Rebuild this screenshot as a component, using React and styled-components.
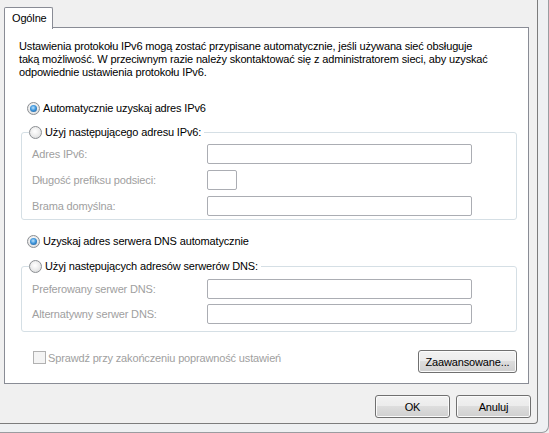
import React from "react";
import styled, { createGlobalStyle, css } from "styled-components";

const GlobalStyle = createGlobalStyle`
  html, body {
    margin: 0;
    padding: 0;
    background: #f0f0f0;
  }
  body {
    font-family: "Liberation Sans", Arial, sans-serif;
    font-size: 11px;
    letter-spacing: -0.15px;
    color: #000;
  }
`;

const Frame = styled.div`
  width: 549px;
  height: 433px;
  box-sizing: border-box;
  background: #eef0f2;
  border-right: 1px solid #9a9ca0;
  border-bottom: 1px solid #9a9ca0;
  border-bottom-right-radius: 7px;
  overflow: hidden;
`;

const Dialog = styled.div`
  width: 538px;
  height: 424px;
  box-sizing: border-box;
  background: #f0f0f0;
  border-right: 1px solid #7c7c7c;
  border-bottom: 1px solid #7c7c7c;
  border-bottom-right-radius: 4px;
  padding: 7px 6px 0 4px;
  display: flex;
  flex-direction: column;
`;

const TabStrip = styled.div`
  display: flex;
  height: 21px;
  margin-bottom: -1px;
  position: relative;
  z-index: 1;
`;

const Tab = styled.div`
  width: 49px;
  box-sizing: border-box;
  height: 22px;
  padding: 3px 0 0 7px;
  background: #fff;
  border: 1px solid #898c95;
  border-bottom: none;
  border-radius: 2px 2px 0 0;
  line-height: 14px;
`;

const Panel = styled.div`
  height: 357px;
  box-sizing: border-box;
  margin-right: 2px;
  background: #fff;
  border: 1px solid #898c95;
  padding: 12px 11px 0 14px;
  display: flex;
  flex-direction: column;
`;

const Intro = styled.p`
  margin: 0;
  line-height: 13px;
`;

const RadioRow = styled.label`
  display: flex;
  align-items: center;
  gap: 3px;
  height: 15px;
  line-height: 15px;
  margin: ${(p) => p.$margin || "0"};
  padding-left: 8px;
  white-space: nowrap;
`;

const Radio = styled.span`
  width: 13px;
  height: 13px;
  box-sizing: border-box;
  border-radius: 50%;
  border: 1px solid #8b8e92;
  background: radial-gradient(circle at 45% 40%, #ffffff 0%, #eeeeee 45%, #d2d4d6 100%);
  position: relative;
  flex: none;
  ${(p) =>
    p.$checked &&
    css`
      &::after {
        content: "";
        position: absolute;
        left: 2px;
        top: 2px;
        width: 7px;
        height: 7px;
        border-radius: 50%;
        background: radial-gradient(circle at 45% 40%, #bfe3fb 0%, #3f97dd 45%, #1b4f86 100%);
      }
    `}
`;

const Group = styled.fieldset`
  margin: ${(p) => p.$margin || "0"};
  margin-left: 2px;
  margin-right: 0;
  padding: ${(p) => p.$top || 3}px 0 ${(p) => p.$bottom || 5}px 10px;
  border: 1px solid #d5dfe5;
  border-radius: 3px;
  display: grid;
  grid-template-columns: 175px 265px;
  row-gap: ${(p) => p.$gap || 6}px;
  align-items: center;
`;

const Legend = styled.legend`
  padding: 0 3px 0 0;
  margin-left: -3px;
  display: flex;
  align-items: center;
  gap: 3px;
  height: 15px;
  line-height: 15px;
  white-space: nowrap;
`;

const FieldLabel = styled.span`
  color: #a0a0a0;
  line-height: 13px;
`;

const Field = styled.div`
  width: ${(p) => p.$width || 265}px;
  height: 20px;
  box-sizing: border-box;
  border: 1px solid #abadb3;
  border-radius: 2px;
  background: #fff;
`;

const FooterRow = styled.div`
  display: flex;
  align-items: center;
  justify-content: space-between;
  margin: 18px 0 0 14px;
`;

const CheckRow = styled.label`
  display: flex;
  align-items: center;
  gap: 2px;
  margin-top: -8px;
  color: #a0a0a0;
`;

const Check = styled.span`
  width: 13px;
  height: 13px;
  box-sizing: border-box;
  border: 1px solid #b1b1b1;
  background: #f4f4f4;
  flex: none;
`;

const Button = styled.button`
  width: ${(p) => p.$width || 75}px;
  height: 23px;
  box-sizing: border-box;
  padding: 0;
  font: inherit;
  letter-spacing: inherit;
  color: #000;
  border: 1px solid #707070;
  border-radius: 3px;
  background: linear-gradient(#f2f2f2 0%, #ebebeb 50%, #dddddd 50%, #cfcfcf 100%);
  box-shadow: inset 0 0 0 1px #fbfbfb;
`;

const ButtonBar = styled.div`
  display: flex;
  justify-content: flex-end;
  gap: 6px;
  margin-top: 11px;
`;

export default function App() {
  return (
    <>
      <GlobalStyle />
      <Frame>
        <Dialog>
          <TabStrip>
            <Tab>Ogólne</Tab>
          </TabStrip>
          <Panel>
            <Intro>
              Ustawienia protokołu IPv6 mogą zostać przypisane automatycznie, jeśli używana sieć obsługuje
              <br />
              taką możliwość. W przeciwnym razie należy skontaktować się z administratorem sieci, aby uzyskać
              <br />
              odpowiednie ustawienia protokołu IPv6.
            </Intro>

            <RadioRow $margin="22px 0 0 0">
              <Radio $checked />
              Automatycznie uzyskaj adres IPv6
            </RadioRow>

            <Group $margin="9px 0 0 0" $top={4} $gap={6} $bottom={3}>
              <Legend>
                <Radio />
                Użyj następującego adresu IPv6:
              </Legend>
              <FieldLabel>Adres IPv6:</FieldLabel>
              <Field />
              <FieldLabel>Długość prefiksu podsieci:</FieldLabel>
              <Field $width={30} />
              <FieldLabel>Brama domyślna:</FieldLabel>
              <Field />
            </Group>

            <RadioRow $margin="14px 0 0 0">
              <Radio $checked />
              Uzyskaj adres serwera DNS automatycznie
            </RadioRow>

            <Group $margin="10px 0 0 0" $top={5} $gap={5} $bottom={7}>
              <Legend>
                <Radio />
                Użyj następujących adresów serwerów DNS:
              </Legend>
              <FieldLabel>Preferowany serwer DNS:</FieldLabel>
              <Field />
              <FieldLabel>Alternatywny serwer DNS:</FieldLabel>
              <Field />
            </Group>

            <FooterRow>
              <CheckRow>
                <Check />
                Sprawdź przy zakończeniu poprawność ustawień
              </CheckRow>
              <Button $width={99}>Zaawansowane...</Button>
            </FooterRow>
          </Panel>
          <ButtonBar>
            <Button>OK</Button>
            <Button>Anuluj</Button>
          </ButtonBar>
        </Dialog>
      </Frame>
    </>
  );
}
